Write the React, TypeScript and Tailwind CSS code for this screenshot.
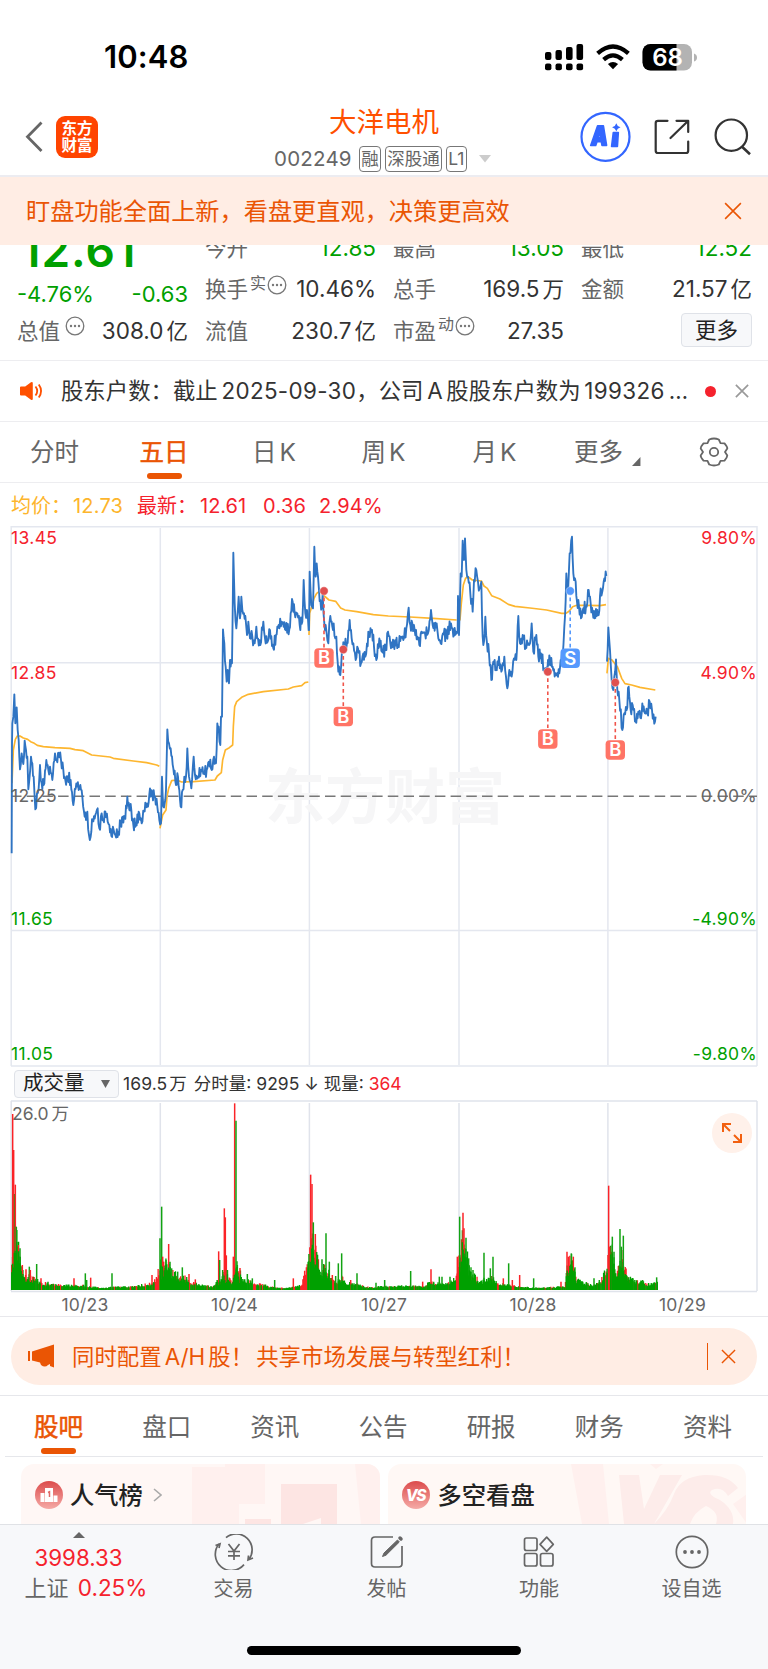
import React from "react";

type Pt = [number, number];

/* ---------- data helpers ---------- */

const noise = (n: number) => {
  const v = Math.sin(n * 127.1 + 311.7) * 43758.5453;
  return v - Math.floor(v);
};

const parse = (s: string): Pt[] =>
  s.trim().split(/\s+/).map((p) => p.split(",").map(Number) as Pt);

const shift = (pts: Pt[], dx: number): Pt[] => pts.map(([x, y]) => [x + dx, y]);

const smooth = (pts: Pt[]) => "M" + pts.map((p) => p.join(",")).join("L");

// Adds minute-level jitter between the recorded turning points.
const jagged = (pts: Pt[], amp = 20) => {
  const out: string[] = [];
  for (let i = 0; i < pts.length - 1; i++) {
    const [x0, y0] = pts[i];
    const [x1, y1] = pts[i + 1];
    out.push(`${x0},${y0}`);
    const n = Math.floor((x1 - x0) / 2);
    for (let k = 1; k < n; k++) {
      const t = k / n;
      const j = (k % 2 ? 1 : -1) * noise(x0 * 3.1 + k) * amp;
      out.push(`${(x0 + (x1 - x0) * t).toFixed(1)},${(y0 + (y1 - y0) * t + j).toFixed(1)}`);
    }
  }
  out.push(pts[pts.length - 1].join(","));
  return "M" + out.join("L");
};

/* ---------- price series (thirds of a pixel) ---------- */

const price: Pt[][] = [
  parse(`35,1030 36,700 37,640 40,620 43,553 46,640 50,592 53,660 56,690 60,778 65,730 70,762 74,692 78,720 82,740 85,838 88,810 93,740 97,760 101,800 106,898 111,850 116,835 120,765 125,820 131,825 139,750 145,780 150,770 157,810 165,730 170,750 176,728 183,750 190,780 196,810 203,800 212,810 220,885 229,820 236,840 241,825 247,860 252,905 258,930 262,905 267,975 272,980 278,930 286,915 293,895 298,955 305,910 310,930 316,905 323,935 328,945 334,978 341,960 346,975 355,965 362,940 368,920 374,925 382,860 388,900 394,900 400,945 408,940 418,910 425,940 432,905 438,880 444,890 450,835 457,850 465,860 472,890 478,930 483,940 486,800 490,890 494,880 498,840 502,658 507,700 512,715 520,775 528,825 534,800 542,890 548,840 553,800 558,800 562,715 567,800 574,835 581,740 585,795 594,800 603,780 612,790 620,780 627,755 635,780 642,740 648,760 652,640 656,650 661,705 663,620 666,620 669,358 673,400 677,470 680,515 683,480 687,520 690,450 696,460 700,128 704,280 709,355 712,320 716,260 720,325 724,260 727,300 732,310 738,340 741,375 745,335 750,385 757,380 764,400 769,350 774,385 781,405 790,335 795,385 803,395 810,360 820,415 828,375 836,345 845,335 855,358 868,358 872,310 878,275 884,310 892,310 899,345 907,335 911,210 916,310 923,310 926,362`),
  shift(parse(`27,362 29,185 34,285 39,295 43,110 47,200 50,160 54,200 57,240 61,270 66,290 68,250 73,340 77,345 80,370 85,400 88,340 91,318 97,350 101,340 106,385 109,380 113,455 121,495 126,420 132,400 141,400 149,330 155,385 160,400 167,450 174,415 183,460 190,430 196,440 201,400 207,370 216,360 222,410 229,450 238,385 246,425 257,420 264,365 271,400 281,400 294,405 303,380 310,390 319,355 326,293 331,345 337,340 344,360 352,380 358,405 364,365 375,370 384,370 393,300 398,345 410,340 415,385 422,400 429,370 440,380 453,340 460,380 468,365 473,365 474,258 477,375 482,190 485,200 488,92 492,150 495,85 499,180 504,200 511,250 518,305 522,210 529,180 534,215 539,235 544,215 548,380 552,395 556,320 561,400 567,430 574,510 580,455 588,480 597,440 604,485 613,440 618,500 622,535 628,480 635,500 642,445 649,450 655,318 660,400 668,375 677,415 685,400 690,400 695,340`), 900)
    .concat(shift(parse(`10,425 19,375 25,440 33,430 42,475 52,480 54,450 60,445 68,470 78,495 88,490 92,450 98,440 103,350 105,320 109,190 114,250 119,130 126,80 130,190 137,215 141,275 147,290 153,325 160,295 170,290 176,240 182,280 188,305 194,325 202,300 206,315 212,235 217,245 223,205 229,198`), 1590)),
  shift(parse(`231,455 235,352 240,420 245,510 250,540 253,500 258,448 262,540 268,570 277,660 283,610 290,600 296,530 302,600 308,585 317,635 325,605 333,625 337,580 345,610 352,610 359,575 366,600 375,635 377,620`), 1590),
];

const average: Pt[][] = [
  parse(`36,820 40,720 46,688 52,678 60,678 70,684 83,688 92,695 103,700 112,706 130,710 165,713 210,715 225,719 250,722 275,735 330,741 340,745 400,753 440,758 470,765 478,769`),
  parse(`480,955 484,935 488,915 498,900 501,860 506,835 515,812 530,810 545,816 580,815 645,810 652,798 664,788 668,750 676,720 688,713 698,705 700,650 704,590 710,575 725,562 745,553 790,545 865,537 880,531 905,527 915,518 925,516`),
  shift(parse(`27,375 29,310 37,285 42,265 50,250 60,243 73,258 87,270 107,274 122,294 135,300 170,305 220,314 265,318 330,321 400,325 470,330`), 900),
  shift(parse(`476,330 480,330 484,280 490,225 497,204 507,202 517,210 544,213 552,228 562,235 575,257 600,267 625,283 645,289 690,294 740,300 785,310 798,310 808,303 818,290 830,286 860,286 900,287 918,284`), 900),
  shift(parse(`231,490 235,445 246,450 262,470 275,505 285,521 305,525 330,532 376,540`), 1590),
];

/* ---------- volume series ---------- */

const envelope: Pt[] = parse(
  `35,105 45,185 58,105 66,60 80,40 100,32 130,20 180,14 250,12 300,7 400,10 450,18 470,35 480,70 500,75 520,50 550,38 580,20 640,9 655,30 680,50 695,25 710,70 730,30 760,20 820,8 860,6 905,15 915,50 925,80`
).concat(
  shift(
    parse(
      `28,100 37,170 48,110 58,60 80,65 95,30 105,22 125,35 140,20 170,16 200,8 330,12 370,10 390,22 440,18 470,40 480,110 490,170 500,100 515,50 540,20 560,35 575,35 590,20 640,12 700,6 795,10 802,90 820,85 830,28 880,12 905,30 920,60 928,110 940,110 950,50 965,100 980,45 1000,28 1030,22 1050,15 1072,25`
    ),
    900
  )
);

const spikes: [number, number, string][] = (
  `38,528,r 41,420,r 44,288,g 46,316,r 49,190,g 53,130,g 55,135,r 60,125,g 67,75,r 78,62,r 88,70,g 91,60,r 98,40,r 110,78,g 123,35,r 144,25,g 222,35,r 256,50,g 260,30,g 272,37,r 336,50,g 456,45,r 480,155,g 485,250,g 488,100,r 491,85,r 498,90,g 506,138,r 510,85,g 515,65,g 533,55,g 547,68,g 567,48,r 586,32,r 656,116,r 659,90,g 668,60,g 673,245,r 676,218,r 679,104,r 682,60,g 700,100,r 704,560,r 708,508,g 712,75,g 720,66,r 742,48,g 757,35,g 824,30,g 880,35,r ` +
  `932,346,r 936,318,r 940,203,g 946,168,r 966,92,g 978,170,g 988,85,g 997,45,r 1007,42,g 1015,80,g 1025,110,g 1052,30,r 1071,50,g 1128,22,g 1154,30,g 1232,57,g 1268,25,r 1293,62,r 1318,40,g 1326,40,g 1350,40,g 1372,100,r 1379,220,g 1385,120,r 1389,232,r 1392,185,r 1398,157,g 1406,95,g 1419,60,g 1452,112,g 1471,65,g 1479,100,g 1510,35,r 1526,80,g 1537,30,r 1559,45,r 1601,35,g 1683,25,r 1701,115,r 1705,100,r 1714,110,g 1720,100,r 1782,35,g 1826,313,r 1829,130,r 1837,160,g 1842,115,g 1860,183,g 1864,130,g 1870,163,g 1928,30,g 1970,38,g`
)
  .split(/\s+/)
  .map((s) => {
    const [x, h, c] = s.split(",");
    return [Number(x), Number(h), c];
  });

const envAt = (x: number) => {
  for (let i = 0; i < envelope.length - 1; i++) {
    const [x0, h0] = envelope[i];
    const [x1, h1] = envelope[i + 1];
    if (x >= x0 && x <= x1) return h0 + ((h1 - h0) * (x - x0)) / (x1 - x0 || 1);
  }
  return 8;
};

const opening: Pt[] = [[465, 480], [905, 932], [1365, 1378], [1800, 1806], [1812, 1835]];
const bars = (() => {
  let green = "";
  let red = "";
  for (let x = 35; x < 1972; x += 2.6) {
    const e = envAt(x);
    const h = Math.max(5, e * (0.7 + noise(x) * 0.6));
    const inOpening = opening.some(([a, b]) => x > a && x < b);
    const isRed = noise(x * 1.7 + 5) < (inOpening ? 0.75 : 0.28);
    const d = `M${x.toFixed(1)},690v-${h.toFixed(1)}`;
    if (isRed) {
      red += d;
      if (!inOpening && e > 30) green += `M${x.toFixed(1)},690v-${(h * 0.7).toFixed(1)}`;
    } else green += d;
  }
  return { green, red };
})();

/* ---------- small pieces ---------- */

const Close = ({ size, color, w = 1.6 }: { size: number; color: string; w?: number }) => (
  <svg width={size} height={size} viewBox="0 0 16 16" fill="none" stroke={color} strokeWidth={w}>
    <path d="M1 1L15 15M15 1L1 15" />
  </svg>
);

const Dots = () => (
  <svg className="shrink-0" width="20" height="20" viewBox="0 0 20 20" fill="none" stroke="#777" strokeWidth="1.3">
    <circle cx="10" cy="10" r="8.8" />
    <g fill="#777" stroke="none">
      <circle cx="6" cy="10" r="1.2" />
      <circle cx="10" cy="10" r="1.2" />
      <circle cx="14" cy="10" r="1.2" />
    </g>
  </svg>
);

const Stat = ({ label, value, unit, sup, dots, green }: { label: string; value?: string; unit?: string; sup?: string; dots?: boolean; green?: boolean }) => (
  <div className="flex h-[41.5px] items-center justify-between whitespace-nowrap">
    <div className="flex items-center text-[21.5px] text-[#666]">
      {label}
      {sup && <span className="mb-[13px] ml-[2px] text-[16px] leading-none">{sup}</span>}
      {dots && <span className={sup ? "mb-[9px] ml-[1px]" : "mb-[9px] ml-[5px]"}><Dots /></span>}
    </div>
    <div className={green ? "text-[22.5px] text-[#00a000]" : "text-[22.5px] text-[#333]"}>
      {value}
      {unit && <span className="ml-[3px] text-[21.5px]">{unit}</span>}
    </div>
  </div>
);

const Tag = ({ children }: { children: React.ReactNode }) => (
  <span className="flex h-[26px] items-center rounded-[4px] border-[1.5px] border-[#777] px-[1.5px] text-[17.5px] leading-none text-[#666]">
    {children}
  </span>
);

const Marker = ({ x, y, by, kind }: { x: number; y: number; by: number; kind: "B" | "S" }) => {
  const c = kind === "B" ? "#ff7466" : "#5599fd";
  const dot = kind === "B" ? "#e05050" : "#5599fd";
  return (
    <g>
      <path d={`M${x},${y}V${by - 10}`} stroke={kind === "B" ? "#f0544a" : c} strokeWidth="1.6" strokeDasharray="3.6 3" />
      <circle cx={x} cy={y} r="4.2" fill={dot} stroke="#fff" strokeOpacity=".5" strokeWidth=".8" />
      <rect x={x - 9.7} y={by - 9.7} width="19.4" height="19.4" rx="4" fill={c} />
      <text x={x} y={by + 6.4} textAnchor="middle" fontSize="18.5" fontWeight="600" fill="#fff">{kind}</text>
    </g>
  );
};

const axisLabels: [number, string, string, string][] = [
  [544, "13.45", "9.80%", "#f5222d"],
  [678.5, "12.85", "4.90%", "#f5222d"],
  [802, "12.25", "0.00%", "#666"],
  [925, "11.65", "-4.90%", "#00a000"],
  [1060, "11.05", "-9.80%", "#00a000"],
];

const tabs: [string, string, string][] = [
  ["分时", "", "w-[109px]"],
  ["五日", "", "w-[110px]"],
  ["日", "K", "w-[110px]"],
  ["周", "K", "w-[109px]"],
  ["月", "K", "w-[113px]"],
];

/* ---------- page ---------- */

export default function App() {
  return (
    <div className="flex h-[1669px] w-[768px] flex-col overflow-hidden bg-white font-['Inter','Noto_Sans_CJK_SC',sans-serif] text-[#333]">
      {/* status bar */}
      <div className="flex h-[100px] shrink-0 items-center justify-between pl-[104px] pr-[70px] pt-[13px]">
        <div className="text-[31px] font-semibold leading-none tracking-[0.1px] text-black">10:48</div>
        <svg width="153" height="28" viewBox="545 42 153 28">
          <g fill="#000">
            <rect x="545" y="51" width="6.4" height="8" rx="2" />
            <rect x="555.5" y="49" width="6.4" height="10" rx="2" />
            <rect x="566" y="46" width="6.6" height="13" rx="2" />
            <rect x="576.5" y="43" width="6.6" height="16" rx="2" />
            <rect x="545" y="62.5" width="6.4" height="6.8" rx="2" />
            <rect x="555.5" y="62.5" width="6.4" height="6.8" rx="2" />
            <rect x="566" y="62.5" width="6.6" height="6.8" rx="2" />
            <rect x="576.5" y="62.5" width="6.6" height="6.8" rx="2" />
            <path d="M613 68.2L607.9 63Q613 58.8 618.1 63Z" />
          </g>
          <g fill="none" stroke="#000" strokeWidth="4.2">
            <path d="M597.6 52.4Q613 38.6 628.4 52.4" />
            <path d="M603.6 58.6Q613 50.2 622.4 58.6" />
          </g>
          <clipPath id="batt"><rect x="642.5" y="43" width="49.5" height="26.5" rx="8" /></clipPath>
          <g clipPath="url(#batt)">
            <rect x="642" y="43" width="51" height="27" fill="#b3b3b3" />
            <rect x="642" y="43" width="34.5" height="27" fill="#000" />
          </g>
          <path d="M694 52.5q3 1 3 4t-3 4z" fill="#b3b3b3" />
          <text x="667.5" y="64.9" textAnchor="middle" fontSize="24" fontWeight="600" fill="#fff">68</text>
        </svg>
      </div>

      {/* title bar */}
      <div className="grid h-[77px] shrink-0 grid-cols-[240px_1fr_240px] border-b-2 border-[#ececf1]">
        <div className="flex items-center gap-[13px] pb-[2px] pl-[25px]">
          <svg width="18" height="32" viewBox="0 0 18 32" fill="none" stroke="#666" strokeWidth="2.8">
            <path d="M16.5 1.5L2.5 15.7L16.5 30" />
          </svg>
          <div className="flex h-[42px] w-[42px] flex-col items-center justify-center rounded-[9px] bg-[#ff4400] text-[15.5px] font-bold leading-[17px] text-white">
            <span>东方</span>
            <span>财富</span>
          </div>
        </div>
        <div className="flex flex-col items-center">
          <div className="mt-[6px] text-[27.5px] leading-[32px] text-[#ff5000]">大洋电机</div>
          <div className="mt-[8px] flex items-center pr-[3px]">
            <span className="mr-[7px] text-[20.5px] leading-[26px] tracking-[0.2px] text-[#666]">002249</span>
            <div className="flex gap-[3.5px]">
              <Tag>融</Tag>
              <Tag>深股通</Tag>
              <Tag>L1</Tag>
            </div>
            <svg className="ml-[12px]" width="12" height="8" viewBox="0 0 12 8"><path d="M0 0H12L6 7.5Z" fill="#ccc" /></svg>
          </div>
        </div>
        <svg width="240" height="75" viewBox="528 100 240 75" fill="none" stroke="#333" strokeWidth="2.2">
          <circle cx="605.5" cy="136.8" r="24" stroke="#3366ff" strokeWidth="2.2" />
          <g fill="#3366ff" stroke="#3366ff" strokeWidth="1.6" strokeLinejoin="round">
            <path fillRule="evenodd" d="M590.7 145.4L597.6 125.8H603.4L606.6 145.4H602L601.3 141.7H597L595.7 145.4ZM598.2 137.5H600.8L600.3 132.5Z" />
            <path d="M613.3 132.6H618.3L617.4 146.4H611.6Z" />
          </g>
          <path d="M616.3 123.3L617.8 126L620.5 127.3L617.8 128.7L616.3 131.3L614.8 128.7L612.1 127.3L614.8 126Z" fill="#3366ff" stroke="none" />
          <g strokeLinecap="round" strokeLinejoin="round">
            <path d="M667.5 120.8H658Q655.7 120.8 655.7 123V150.7Q655.7 153 658 153H686Q688.2 153 688.2 150.7V141.5" />
            <path d="M676.5 120.8H688.2V132M688 121L670.5 138" />
          </g>
          <circle cx="731.3" cy="135.2" r="15.7" />
          <path d="M741.5 146.3L750 154.2" strokeWidth="2.6" />
        </svg>
      </div>

      {/* announcement */}
      <div className="flex h-[68px] shrink-0 items-center justify-between bg-[#ffede4] pl-[26px] pr-[26px] text-[#ea5504]">
        <span className="pt-[3px] text-[24.2px] leading-none">盯盘功能全面上新，看盘更直观，决策更高效</span>
        <Close size={18} color="#ea5504" w={1.4} />
      </div>

      {/* quote */}
      <div className="h-[116px] shrink-0 overflow-hidden border-b-[1.5px] border-[#ededf0]">
        <div className="-mt-[18px] grid grid-cols-4 gap-x-[17px] pl-[17px] pr-[16px]">
          <div>
            <div className="flex h-[45px] items-center pl-[4px] text-[46px] font-semibold leading-none tracking-[1px] text-[#00a000]">12.61</div>
            <div className="mt-[6px] flex h-[32px] items-center justify-between text-[22px] text-[#00a000]">
              <span>-4.76%</span>
              <span>-0.63</span>
            </div>
            <Stat label="总值" value="308.0" unit="亿" dots />
          </div>
          <div>
            <Stat label="今开" value="12.85" green />
            <Stat label="换手" sup="实" dots value="10.46%" />
            <Stat label="流值" value="230.7" unit="亿" />
          </div>
          <div>
            <Stat label="最高" value="13.05" green />
            <Stat label="总手" value="169.5" unit="万" />
            <Stat label="市盈" sup="动" dots value="27.35" />
          </div>
          <div>
            <Stat label="最低" value="12.52" green />
            <Stat label="金额" value="21.57" unit="亿" />
            <div className="flex h-[41.5px] items-center justify-end">
              <div className="mb-[2px] flex h-[34px] w-[71px] items-center justify-center rounded-[4px] border-[1.5px] border-[#dfe2e8] bg-[#f7f8fa] text-[21.5px] text-[#222]">更多</div>
            </div>
          </div>
        </div>
      </div>

      {/* news line */}
      <div className="flex h-[61px] shrink-0 items-center border-b-[1.5px] border-[#ededf0] pl-[19px] pr-[19px]">
        <svg width="24" height="20" viewBox="0 0 24 20">
          <path d="M1 6.5q0-1 1-1h4.2L12 1.2q1.8-1 1.8 1V17.8q0 2-1.8 1L6.2 14.5H2q-1 0-1-1z" fill="#ff5000" />
          <path d="M16.5 5.5q3.5 4.5 0 9M19.8 3.5q4.6 6.5 0 13" fill="none" stroke="#ff5000" strokeWidth="1.8" />
        </svg>
        <span className="ml-[18px] w-[630px] whitespace-nowrap text-[22.4px] leading-none [word-spacing:-2.6px]">
          股东户数：截止 <span className="tracking-[0.35px]">2025-09-30</span>，公司 A 股股东户数为 <span className="tracking-[0.35px]">199326 …</span>
        </span>
        <span className="ml-[15px] h-[11px] w-[11px] rounded-full bg-[#f5222d]" />
        <span className="ml-[19px]"><Close size={14} color="#999" w={1.9} /></span>
      </div>

      {/* period tabs */}
      <div className="flex h-[61px] shrink-0 border-b-[1.5px] border-[#ededf0] text-[24.5px] leading-none text-[#666]">
        {tabs.map(([t, k, w], i) => (
          <div key={t} className={`flex shrink-0 flex-col items-center pt-[18px] ${w} ${i === 1 ? "text-[#ea5504] [-webkit-text-stroke:0.5px_#ea5504]" : ""}`}>
            <span className="h-[24px] whitespace-nowrap">{t}{k && <span className="ml-[3px]">{k}</span>}</span>
            {i === 1 && <span className="mt-[9px] h-[6px] w-[35px] rounded-full bg-[#ea5504]" />}
          </div>
        ))}
        <div className="flex w-[140px] pl-[23px] pt-[18px]">
          <span className="whitespace-nowrap">更多</span>
          <svg className="ml-[9px] mt-[17px]" width="9" height="9" viewBox="0 0 8 8"><path d="M7.5 0V8H0Z" fill="#666" /></svg>
        </div>
        <svg className="mt-[15px] ml-[7px]" width="32" height="30" viewBox="-16 -15 32 30" fill="none" stroke="#666" strokeWidth="1.8" strokeLinejoin="round">
          <path d="M-4.8-12.5Q0-14.5 4.8-12.5L6.5-8.8L10.5-8.6Q13.5-5 13.3-3.5L11 0L13.3 3.500Q13.2 5.5 10.5 8.6L6.5 8.8L4.8 12.5Q0 14.5-4.8 12.5L-6.5 8.8L-10.5 8.6Q-13.5 5-13.3 3.5L-11 0L-13.3-3.5Q-13.2-5.5-10.5-8.6L-6.5-8.8Z" />
          <circle r="4.2" />
        </svg>
      </div>

      {/* legend */}
      <div className="flex h-[43px] shrink-0 items-center whitespace-nowrap pl-[11px] pt-[2px] text-[20px] leading-none text-[#f5222d]">
        <span className="w-[62px] text-[#fdb52c]">均价：</span>
        <span className="w-[64px] tracking-[0.2px] text-[#fdb52c]">12.73</span>
        <span className="w-[63px]">最新：</span>
        <span className="w-[63px]">12.61</span>
        <span className="w-[56px] tracking-[0.3px]">0.36</span>
        <span className="tracking-[0.2px]">2.94%</span>
      </div>

      {/* price chart */}
      <svg className="shrink-0" width="768" height="541" viewBox="0 526 768 541">
        <g stroke="#e4e7ef" strokeWidth="1.5" fill="none">
          <path d="M11 526.7H757M11 662.7H757M11 930.5H757M11 1066H757" />
          <path d="M11.2 526V1066M160.3 528V1065M309.4 528V1065M459 528V1065M607.9 528V1065M757 526V1066" />
        </g>
        <text x="385" y="819" textAnchor="middle" fontSize="60" fontWeight="700" fill="#f6f6f7">东方财富</text>
        <path d="M11 796.3H757" stroke="#777" strokeWidth="1.4" strokeDasharray="10.5 5.2" />
        <g transform="translate(0 510) scale(.33333)" fill="none" strokeLinejoin="round">
          {average.map((p, i) => <path key={i} d={smooth(p)} stroke="#fdb62f" strokeWidth="5" />)}
          {price.map((p, i) => <path key={i} d={jagged(p)} stroke="#2f74c3" strokeWidth="5.6" />)}
        </g>
        <g fontSize="17.5" letterSpacing=".35">
          {axisLabels.map(([y, l, r, c]) => (
            <g key={l} fill={c}>
              <text x="11" y={y}>{l}</text>
              <text x="757" y={y} textAnchor="end">{r}</text>
            </g>
          ))}
        </g>
        <Marker x={324} y={591} by={658} kind="B" />
        <Marker x={343.3} y={649.5} by={716.5} kind="B" />
        <Marker x={547.8} y={671.7} by={739} kind="B" />
        <Marker x={570.2} y={591} by={658.3} kind="S" />
        <Marker x={615.3} y={682.5} by={750} kind="B" />
      </svg>

      {/* volume header */}
      <div className="flex h-[33px] shrink-0 items-center whitespace-nowrap pl-[14px] text-[17.5px] leading-none">
        <div className="mr-[4px] flex h-[28px] w-[105px] items-center justify-between rounded-[4px] border-[1.5px] border-[#dfe2e8] bg-[#f7f8fa] pl-[8px] pr-[8px] text-[20.5px] text-[#222]">
          成交量
          <svg width="9" height="8" viewBox="0 0 9 8"><path d="M0 0H9L4.5 8Z" fill="#666" /></svg>
        </div>
        <span className="tracking-[0.1px]">169.5</span>
        <span className="ml-[2px]">万</span>
        <span className="ml-[7px]">分时量: 9295 ↓ 现量: <span className="text-[#f5222d]">364</span></span>
      </div>

      {/* volume chart */}
      <div className="relative h-[217px] shrink-0 border-b-[1.5px] border-[#e8e8ec]">
        <svg width="768" height="215" viewBox="0 1100 768 215">
          <g stroke="#e0e3eb" strokeWidth="1.5" fill="none">
            <path d="M11 1101H757M11 1291.5H757M11.2 1101V1291M757 1101V1291" />
            <path d="M160.3 1103V1290M309.4 1103V1290M459 1103V1290M607.9 1103V1290" />
          </g>
          <text x="12" y="1120" fontSize="17.5" fill="#666">26.0<tspan dx="3">万</tspan></text>
          <g transform="translate(0 1060) scale(.33333)" fill="none" strokeWidth="4">
            <path d={bars.red} stroke="#fb2328" />
            <path d={bars.green} stroke="#00a000" />
            {spikes.map(([x, h, c]) => (
              <path key={x} d={`M${x},690v-${h}`} stroke={c === "r" ? "#fb2328" : "#12a312"} strokeWidth="4.5" />
            ))}
            <path d={bars.green.replace(/v-([\d.]+)/g, (_m, h) => `v-${(Number(h) * 0.8).toFixed(1)}`)} stroke="#00a000" />
          </g>
          <g fontSize="17.5" fill="#666" textAnchor="middle" letterSpacing=".2">
            <text x="85" y="1311">10/23</text>
            <text x="234.5" y="1311">10/24</text>
            <text x="384" y="1311">10/27</text>
            <text x="533" y="1311">10/28</text>
            <text x="682.5" y="1311">10/29</text>
          </g>
        </svg>
        <div className="absolute left-[712px] top-[13px] flex h-[40px] w-[40px] items-center justify-center rounded-full bg-[#fff1ea]">
          <svg width="20" height="20" viewBox="0 0 20 20" fill="none" stroke="#f26010" strokeWidth="2">
            <path d="M9 1H1V9M1 1L8 8M19 11V19H11M19 19L12 12" />
          </svg>
        </div>
      </div>

      {/* promo */}
      <div className="flex h-[79px] shrink-0 items-center border-b-[1.5px] border-[#e6e7eb] px-[11px]">
        <div className="flex h-[57px] w-full items-center rounded-full bg-[#ffede4] pl-[16px] pr-[21px] text-[#ea5504]">
          <svg width="28" height="24" viewBox="0 0 28 24" fill="#ea5504">
            <path d="M1 7H3V17H1ZM5 7.5L27 0.5V23.5L23 22V20L21 21Q18 24 14 21L13 18.5L5 16.5Z" />
          </svg>
          <span className="ml-[17px] whitespace-nowrap pt-[2px] text-[22.4px] leading-none [word-spacing:-3.2px]">同时配置 A/H 股！ 共享市场发展与转型红利！</span>
          <span className="ml-auto h-[27px] w-[1.5px] bg-[#ea5504]" />
          <span className="ml-[13px]"><Close size={15} color="#ea5504" w={1.5} /></span>
        </div>
      </div>

      {/* section tabs */}
      <div className="mx-[5px] flex h-[61px] shrink-0 justify-between border-b-[1.5px] border-[#e6e7eb] pl-[29px] pr-[31px] pt-[19px] text-[24.5px] leading-none text-[#666]">
        {["股吧", "盘口", "资讯", "公告", "研报", "财务", "资料"].map((t, i) => (
          <div key={t} className={i === 0 ? "flex flex-col items-center text-[#ea5504] [-webkit-text-stroke:0.5px_#ea5504]" : "flex flex-col items-center"}>
            <span className="h-[25px]">{t}</span>
            {i === 0 && <span className="mt-[8px] h-[6px] w-[35px] rounded-full bg-[#ea5504]" />}
          </div>
        ))}
      </div>

      {/* cards */}
      <div className="flex h-[67px] shrink-0 gap-[8px] overflow-hidden pl-[21px] pr-[22px] pt-[7px]">
        <div className="relative h-[80px] flex-1 overflow-hidden rounded-t-[13px] bg-[#fff7f5]">
          <svg className="absolute left-0 top-0" width="359" height="60" viewBox="0 0 359 60">
            <path d="M171 3H204V0H244V40H218V60H171Z" fill="#fff0ee" />
            <path d="M224 55H250V60H224ZM260 20H316V60H300V54L282 60H260Z" fill="#fde5e3" />
            <path d="M334 0H359V60H340Z" fill="#fff0ee" />
          </svg>
          <div className="relative flex h-[62px] items-center pl-[14px]">
            <svg width="28" height="28" viewBox="0 0 28 28">
              <defs><linearGradient id="ic" x1="0" y1="0" x2="0" y2="1"><stop offset="0" stopColor="#dc4c4c" /><stop offset="1" stopColor="#f5aaa6" /></linearGradient></defs>
              <circle cx="14" cy="14" r="14" fill="url(#ic)" />
              <path d="M5.5 12H9.5V21H5.5ZM10 7H18V21H10ZM18.5 14.5H22.5V21H18.5Z" fill="#fff" />
              <path d="M13 11.5L14.5 10.8V16" fill="none" stroke="#e06a68" strokeWidth="1.5" />
            </svg>
            <span className="ml-[7px] pt-[1px] text-[24.3px] font-medium leading-none text-[#222]">人气榜</span>
            <svg className="ml-[10px]" width="9" height="14" viewBox="0 0 9 14" fill="none" stroke="#aaa" strokeWidth="1.6"><path d="M1 1L8 7L1 13" /></svg>
          </div>
        </div>
        <div className="relative h-[80px] flex-1 overflow-hidden rounded-t-[13px] bg-[#fff8f5]">
          <svg className="absolute left-0 top-0" width="359" height="60" viewBox="0 0 359 60">
            <path d="M183 0H215L221 60H194Z" fill="#fff0ee" />
            <path d="M231 11H251L256 45L272 11H294L266 60H236ZM350 24Q340 10 316 11Q292 13 286 30Q280 46 266 60H302Q306 48 318 42Q332 48 328 60H345Q347 46 332 36Q318 30 324 26Q334 22 340 32Z" fill="#fdecea" />
            <path d="M262 0H275L268 5ZM345 40L359 30V60Z" fill="#fff0ee" />
          </svg>
          <div className="relative flex h-[62px] items-center pl-[14px]">
            <svg width="28" height="28" viewBox="0 0 28 28">
              <circle cx="14" cy="14" r="14" fill="url(#ic)" />
              <text x="13.3" y="20" textAnchor="middle" fontSize="15.5" fontWeight="800" fontStyle="italic" letterSpacing="-1.6" fill="#fff">VS</text>
            </svg>
            <span className="ml-[8px] pt-[1px] text-[24.3px] font-medium leading-none text-[#222]">多空看盘</span>
          </div>
        </div>
      </div>

      {/* bottom bar */}
      <div className="flex h-[146px] shrink-0 flex-col items-center border-t-[1.5px] border-[#e0e2e6] bg-[#f7f8fa]">
        <div className="flex h-[121px] w-full text-[20px] leading-none text-[#666]">
          <div className="flex w-[157px] flex-col items-center whitespace-nowrap pt-[7px]">
            <svg width="12" height="6" viewBox="0 0 12 6"><path d="M6 0L12 6H0Z" fill="#666" /></svg>
            <span className="mt-[9px] text-[22.3px] text-[#f5222d]">3998.33</span>
            <span className="mt-[8px] pl-[15px] text-[22px]">上证 <span className="ml-[3px] text-[22.5px] text-[#f5222d]">0.25%</span></span>
          </div>
          <div className="flex w-[153px] flex-col items-center pt-[9px]">
            <svg width="40" height="36" viewBox="0 0 40 36" fill="none" stroke="#666" strokeWidth="1.7">
              <path d="M12 3.6A15.9 15.9 0 0 1 34.8 25.5M30 30.6A15.9 15.9 0 0 1 5 10" />
              <path d="M1.5 11.5L6 9.8L5 14M34.5 21.5L34 26L39 24" />
              <path d="M14.5 10L20 17L25.5 10M20 17V26M14 17.5H26M14 21.8H26" />
            </svg>
            <span className="mt-[9px]">交易</span>
          </div>
          <div className="flex w-[153px] flex-col items-center pt-[9px]">
            <svg width="34" height="36" viewBox="0 0 34 36" fill="none" stroke="#666" strokeWidth="1.7">
              <path d="M23 3H5Q1.5 3 1.5 6.5V29.5Q1.5 33 5 33H28.5Q32 33 32 29.5V12" />
              <path d="M12.5 22.5L14 19L27.5 6L29.3 8L16 21.2Z" fill="#666" strokeWidth="1" />
              <path d="M30 4L31 5" strokeWidth="3.5" strokeLinecap="round" />
            </svg>
            <span className="mt-[9px]">发帖</span>
          </div>
          <div className="flex w-[152px] flex-col items-center pt-[9px]">
            <svg width="32" height="36" viewBox="0 0 32 36" fill="none" stroke="#666" strokeWidth="1.7">
              <rect x="1.5" y="4" width="12.5" height="12.5" rx="2" />
              <rect x="1.5" y="19.5" width="12.5" height="12.5" rx="2" />
              <rect x="17.5" y="19.5" width="12.5" height="12.5" rx="2" />
              <path d="M23.7 3.2L30.3 10.3L23.7 17.4L17 10.3Z" strokeLinejoin="round" />
            </svg>
            <span className="mt-[9px]">功能</span>
          </div>
          <div className="flex w-[153px] flex-col items-center pt-[9px]">
            <svg width="34" height="36" viewBox="0 0 34 36" fill="none" stroke="#666" strokeWidth="1.7">
              <circle cx="17" cy="18" r="15.7" />
              <g fill="#666" stroke="none"><circle cx="10" cy="18" r="1.9" /><circle cx="17" cy="18" r="1.9" /><circle cx="24" cy="18" r="1.9" /></g>
            </svg>
            <span className="mt-[9px]">设自选</span>
          </div>
        </div>
        <div className="h-[9px] w-[274px] rounded-full bg-black" />
      </div>
    </div>
  );
}
